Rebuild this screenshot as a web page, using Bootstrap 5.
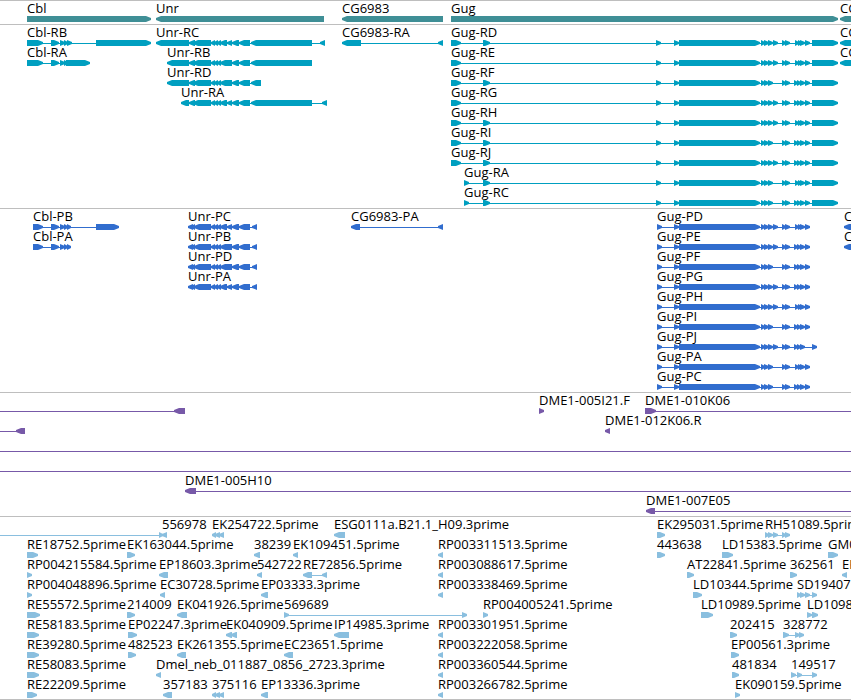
<!DOCTYPE html>
<html lang="en">
<head>
<meta charset="utf-8">
<meta name="viewport" content="width=device-width, initial-scale=1">
<title>Genome tracks</title>
<link href="https://cdn.jsdelivr.net/npm/bootstrap@5.3.0/dist/css/bootstrap.min.css" rel="stylesheet">
<style>
  body { font-family: "Open Sans", "Noto Sans", sans-serif; font-size: 13px; line-height: 16px; color: #000; }
  .browser { border-top: 1px solid #bebebe; }
  .track { padding-bottom: 3px; border-bottom: 1px solid #bebebe; }
  .track:last-child { padding-bottom: 2px; }
  .lane { height: 20px; overflow: visible; }
  .lane text { fill: #000; }
  .lane rect { shape-rendering: crispEdges; }
  .gene { fill: #3f8f96; }
  .transcript { fill: #009fc0; }
  .protein { fill: #316dce; }
  .clone { fill: #7759a8; }
  .est { fill: #8abfdf; }
</style>
<script src="https://cdn.jsdelivr.net/npm/bootstrap@5.3.0/dist/js/bootstrap.bundle.min.js"></script>
</head>
<body class="bg-white">
<main class="browser container-fluid p-0 overflow-hidden">
  <section class="track d-flex flex-column" data-track="gene" aria-label="Genes"></section>
  <section class="track d-flex flex-column" data-track="transcript" aria-label="Transcripts"></section>
  <section class="track d-flex flex-column" data-track="protein" aria-label="Proteins"></section>
  <section class="track d-flex flex-column" data-track="clone" aria-label="Clones"></section>
  <section class="track d-flex flex-column" data-track="est" aria-label="ESTs"></section>
</main>
<script>
// A feature is [label, strand, blocks, lineStart, lineEnd]; blocks are "start-end" pairs.
const FAR = 4000;
const unrMid = '189-195 193-211 211-215 214-218 217-221';
const unrSplit = '220-227 227-232 232-239 239-250';
const unrJoin = '220-232 232-239 239-250';
const cblMid = '51-59 60-65 64-68';
const gugLong = '674-679 679-760 761-765 764-769 768-773 773-778 782-786 785-790';
const gugShort = '674-679 679-760 761-765 764-769 768-773 782-786 785-790';
const tailA = '795-799 798-802 800-805 805-810';
const tailB = '794-798 797-801 800-805 805-810';
const gugR = (n, start, mid, tail) => ['Gug-R' + n, '>', `${start} 656-661 ${mid} ${tail} 812-838`];
const gugP = (n, mid, tail) => ['Gug-P' + n, '>', `657-662 ${mid} ${tail}`];
const unrP = (n, mid) => ['Unr-P' + n, '<', `188-193 191-195 194-211 211-215 214-218 217-221 ${mid} 252-257`];
const rp = (n) => ['RP00' + n + '.5prime', '<', '438-443'];

const tracks = {
  gene: [
    [['Cbl', '>', '27-151'], ['Unr', '<', '156-324'], ['CG6983', '<', '342-443'], ['Gug', '>', '451-838'], ['CG', '<', '840-880']]
  ],
  transcript: [
    [['Cbl-RB', '>', `27-43 ${cblMid} 67-72 96-151`], ['Unr-RC', '<', `156-189 ${unrMid} ${unrSplit} 251-312 320-325`],
     ['CG6983-RA', '<', '342-361 438-443'], gugR('D', '451-461 483-490', gugLong, tailA), ['CG', '<', '840-880']],
    [['Cbl-RA', '>', `27-43 ${cblMid} 66-90`], ['Unr-RB', '<', `167-189 ${unrMid} ${unrJoin} 251-312`],
     gugR('E', '451-461', gugLong, tailA), ['CG', '<', '840-880']],
    [['Unr-RD', '<', `167-189 ${unrMid} ${unrJoin} 251-261`], gugR('F', '451-461 483-490', gugShort, tailB)],
    [['Unr-RA', '<', `181-189 ${unrMid} ${unrSplit} 251-312 322-327`], gugR('G', '451-461', gugLong, tailB)],
    [gugR('H', '451-461 483-490', gugLong, tailA)],
    [gugR('I', '451-461 483-490', gugShort, tailB)],
    [gugR('J', '451-461 483-490', gugLong, tailB)],
    [gugR('A', '464-469 483-490', gugShort, tailA)],
    [gugR('C', '464-469 483-490', gugShort, tailB)]
  ],
  protein: [
    [['Cbl-PB', '>', `33-43 ${cblMid} 67-71 96-119`], unrP('C', unrSplit), ['CG6983-PA', '<', '351-360 438-443'],
     gugP('D', gugLong, tailA), ['CG', '<', '844-880']],
    [['Cbl-PA', '>', `33-43 ${cblMid} 67-71`], unrP('B', unrJoin), gugP('E', gugLong, tailB), ['CG', '<', '844-880']],
    [unrP('D', unrJoin), gugP('F', gugShort, tailB)],
    [unrP('A', unrSplit), gugP('G', gugLong, tailB)],
    [gugP('H', gugLong, tailA)],
    [gugP('I', gugShort, tailB)],
    [gugP('J', gugLong, '794-798 797-801 800-805 812-817')],
    [gugP('A', gugShort, tailA)],
    [gugP('C', gugShort, tailB)]
  ],
  clone: [
    [['', '<', '174-185', 0, 185], ['DME1-005I21.F', '>', '539-544'], ['DME1-010K06', '>', '645-656', 645, FAR]],
    [['', '<', '16-25', 0, 25], ['DME1-012K06.R', '<', '605-610']],
    [['', '>', '', 0, FAR]],
    [['', '>', '', 0, FAR]],
    [['DME1-005H10', '<', '185-196', 185, FAR]],
    [['DME1-007E05', '<', '646-655', 646, FAR]]
  ],
  est: [
    [['', '>', '159-163', 0, 163], ['556978', '<', '162-167'], ['EK254722.5prime', '<', '212-216 215-220 219-224'],
     ['ESG0111a.B21.1_H09.3prime', '<', '334-345'], ['EK295031.5prime', '>', '657-665'],
     ['RH51089.5prime', '>', '765-769 768-773 773-778 782-786 785-790']],
    [['RE18752.5prime', '>', '27-38'], ['EK163044.5prime', '>', '127-135'], ['38239', '<', '254-260'],
     ['EK109451.5prime', '<', '293-298'], rp('3311513'), ['443638', '>', '657-665'],
     ['LD15383.5prime', '>', '722-733'], ['GM0', '>', '828-838']],
    [['RP004215584.5prime', '>', '27-32'], ['EP18603.3prime', '<', '159-168'], ['542722', '<', '257-262'],
     ['RE72856.5prime', '<', '303-312 322-327'], rp('3088617'), ['AT22841.5prime', '>', '687-694'],
     ['362561', '>', '790-797'], ['EK', '<', '842-847']],
    [['RP004048896.5prime', '>', '27-32'], ['EC30728.5prime', '<', '160-165'], ['EP03333.3prime', '<', '261-268'],
     rp('3338469'), ['LD10344.5prime', '>', '693-702'], ['SD19407', '>', '797-801 800-805 805-810 812-817']],
    [['RE55572.5prime', '>', '27-40'], ['214009', '>', '127-135'], ['EK041926.5prime', '<', '177-187'],
     ['569689', '>', '284-289 462-467'], ['RP004005241.5prime', '>', '483-488'], ['LD10989.5prime', '>', '701-713'],
     ['LD10989', '>', '807-812 812-818']],
    [['RE58183.5prime', '>', '27-39'], ['EP02247.3prime', '>', '128-137'], ['EK040909.5prime', '<', '226-232 231-237'],
     ['IP14985.3prime', '<', '334-349'], rp('3301951'), ['202415', '>', '730-737'], ['328772', '>', '783-789 795-800 799-804']],
    [['RE39280.5prime', '>', '27-39'], ['482523', '>', '128-136'], ['EK261355.5prime', '<', '177-186'],
     ['EC23651.5prime', '<', '284-293'], rp('3222058'), ['EP00561.3prime', '>', '731-739']],
    [['RE58083.5prime', '>', '27-39'], ['Dmel_neb_011887_0856_2723.3prime', '<', '156-161'], rp('3360544'),
     ['481834', '>', '732-739'], ['149517', '>', '791-796 797-802 812-817']],
    [['RE22209.5prime', '>', '27-37'], ['357183', '<', '163-172'], ['375116', '<', '212-216 215-220 219-224'],
     ['EP13336.3prime', '<', '261-268'], rp('3266782'), ['EK090159.5prime', '>', '735-740']]
  ]
};

function block(a, b, strand) {
  const head = Math.min(5, b - a);
  return strand === '>'
    ? `<polygon points="${a},15 ${b - head},15 ${b},17 ${b},19 ${b - head},21 ${a},21"/>`
    : `<polygon points="${b},15 ${a + head},15 ${a},17 ${a},19 ${a + head},21 ${b},21"/>`;
}

function feature([label, strand, spec, from, to]) {
  const blocks = spec ? spec.split(' ').map(p => p.split('-').map(Number)) : [];
  const x1 = from ?? blocks[0][0];
  const x2 = to ?? blocks[blocks.length - 1][1];
  let out = '';
  if (blocks.length !== 1 || from !== undefined) {
    out += `<rect x="${x1}" y="18" width="${x2 - x1}" height="1"/>`;
  }
  out += blocks.map(([a, b]) => block(a, b, strand)).join('');
  if (label) out += `<text x="${blocks[0][0]}" y="12">${label}</text>`;
  return out;
}

document.querySelectorAll('.track').forEach(section => {
  const kind = section.dataset.track;
  section.innerHTML = tracks[kind].map(lane =>
    `<svg class="lane ${kind} d-block w-100">${lane.map(feature).join('')}</svg>`).join('');
});
</script>
</body>
</html>
